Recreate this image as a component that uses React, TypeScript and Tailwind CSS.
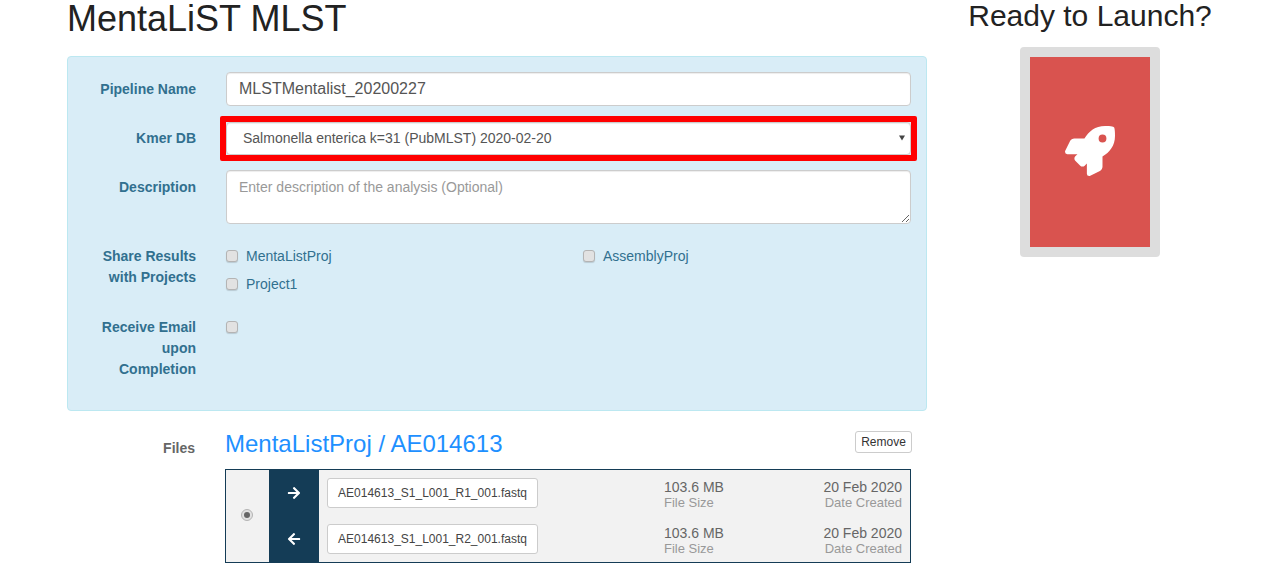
import { FaArrowLeft, FaArrowRight, FaRocket } from "react-icons/fa"

const files = [
  { name: "AE014613_S1_L001_R1_001.fastq", size: "103.6 MB", date: "20 Feb 2020", forward: true },
  { name: "AE014613_S1_L001_R2_001.fastq", size: "103.6 MB", date: "20 Feb 2020", forward: false },
]

function Check() {
  return (
    <input
      type="checkbox"
      className="appearance-none w-3 h-3 mb-[2px] shrink-0 rounded-[3px] border border-[#b4b4b4] bg-[#e2e2e2] shadow-[0_1px_1px_rgba(0,0,0,0.15)]"
    />
  )
}

function Label({ children, className = "" }: { children: React.ReactNode; className?: string }) {
  return (
    <label className={`block w-[129px] shrink-0 pr-[1px] text-right font-bold text-[#31708f] ${className}`}>
      {children}
    </label>
  )
}

export default function App() {
  return (
    <div className="h-[571px] overflow-hidden bg-white pl-[67px] flex font-['Liberation_Sans',sans-serif] text-[14px] leading-[21px] text-[#333]">
      {/* Main column */}
      <div className="w-[860px] shrink-0">
        <h1 className="mb-[18px] h-[38px] text-[36px] leading-[38px] text-[#222]">MentaLiST MLST</h1>

        <form className="h-[355px] rounded border border-[#bce8f1] bg-[#d9edf7] pt-[15px]">
          <div className="flex items-start">
            <Label className="pt-[7px]">Pipeline Name</Label>
            <input
              defaultValue="MLSTMentalist_20200227"
              className="ml-[29px] h-[34px] w-[685px] rounded border border-[#ccc] bg-white px-3 text-[16px] text-[#555] shadow-[inset_0_1px_1px_rgba(0,0,0,0.075)] outline-none"
            />
          </div>

          <div className="mt-[16px] flex items-start">
            <Label className="pt-[6px]">Kmer DB</Label>
            {/* red highlight sits around the select */}
            <div className="relative ml-[23px] w-[697px] -my-[6px] rounded-[2px] border-[6px] border-[#f00]">
              <select
                defaultValue="a"
                className="block h-[33px] w-full appearance-none rounded border border-[#ccc] bg-white px-4 text-[14px] text-[#555] outline-none shadow-[inset_0_1px_1px_rgba(0,0,0,0.075)]"
              >
                <option value="a">Salmonella enterica k=31 (PubMLST) 2020-02-20</option>
              </select>
              <svg className="absolute right-[6px] top-[13px]" width="6" height="6" viewBox="0 0 6 6">
                <polygon points="0,0.5 6,0.5 3,5.5" fill="#444" />
              </svg>
            </div>
          </div>

          <div className="mt-[15px] flex items-start">
            <Label className="pt-[7px]">Description</Label>
            <textarea
              placeholder="Enter description of the analysis (Optional)"
              className="ml-[29px] h-[54px] w-[685px] rounded border border-[#ccc] bg-white px-3 py-[6px] text-[14px] leading-[21px] text-[#555] placeholder:text-[#999] shadow-[inset_0_1px_1px_rgba(0,0,0,0.075)] outline-none"
            />
          </div>

          <div className="mt-[22px] flex items-start">
            <Label>
              Share Results
              <br />
              with Projects
            </Label>
            <div className="ml-[29px] grid w-[600px] grid-cols-[357px_1fr] gap-y-[7px] text-[#31708f]">
              <div className="flex items-center gap-[8px]">
                <Check />
                MentaListProj
              </div>
              <div className="flex items-center gap-[8px]">
                <Check />
                AssemblyProj
              </div>
              <div className="flex items-center gap-[8px]">
                <Check />
                Project1
              </div>
            </div>
          </div>

          <div className="mt-[22px] flex items-start">
            <Label>
              Receive Email
              <br />
              upon
              <br />
              Completion
            </Label>
            <div className="ml-[29px] flex h-[21px] items-center">
              <Check />
            </div>
          </div>
        </form>

        {/* Files */}
        <div className="mt-[20px] flex items-start">
          <div className="w-[128px] shrink-0 pt-[7px] text-right font-bold text-[#666]">Files</div>
          <div className="ml-[30px] w-[687px]">
            <div className="flex h-[38px] items-start justify-between">
              <h2 className="text-[24px] leading-[26px] text-[#1e90ff]">MentaListProj / AE014613</h2>
              <button
                type="button"
                className="h-[22px] w-[57px] rounded-[3px] border border-[#ccc] bg-white text-[12px] leading-[18px] text-[#333]"
              >
                Remove
              </button>
            </div>
            <div className="flex h-[94px] w-[686px] border border-[#143c56] bg-[#f2f2f2]">
              <div className="flex w-[43px] shrink-0 items-center justify-center pb-[2px] pr-[2px]">
                <span className="flex h-3 w-3 items-center justify-center rounded-full border border-[#b4b4b4] bg-[#e2e2e2]">
                  <span className="h-[6px] w-[6px] rounded-full bg-[#666]" />
                </span>
              </div>
              <div className="flex w-[50px] shrink-0 flex-col items-center bg-[#143c56] pt-[16px] text-white">
                <FaArrowRight size={14} />
                <FaArrowLeft size={14} className="mt-[32px]" />
              </div>
              <div className="flex-1 pt-[8px]">
                {files.map((f) => (
                  <div key={f.name} className="mb-[16px] flex h-[30px] items-center pl-[8px] pr-[8px]">
                    <div className="flex h-[30px] w-[211px] shrink-0 items-center justify-center rounded-[3px] border border-[#ccc] bg-white text-[12px] text-[#444]">
                      {f.name}
                    </div>
                    <div className="ml-[126px] mt-[4px] w-[100px] leading-[15px] text-[#666]">
                      {f.size}
                      <div className="text-[13px] text-[#999]">File Size</div>
                    </div>
                    <div className="mt-[4px] flex-1 text-right leading-[15px] text-[#666]">
                      {f.date}
                      <div className="text-[13px] text-[#999]">Date Created</div>
                    </div>
                  </div>
                ))}
              </div>
            </div>
          </div>
        </div>
      </div>

      {/* Launch column */}
      <div className="w-[326px] shrink-0 flex flex-col items-center">
        <h3 className="h-[47px] text-[30px] leading-[31px] text-[#222]">Ready to Launch?</h3>
        <div className="flex h-[210px] w-[140px] items-center justify-center rounded border-[10px] border-[#ddd] bg-[#d9534f] bg-clip-padding pb-[2px] text-white">
          <FaRocket size={50} />
        </div>
      </div>
    </div>
  )
}
